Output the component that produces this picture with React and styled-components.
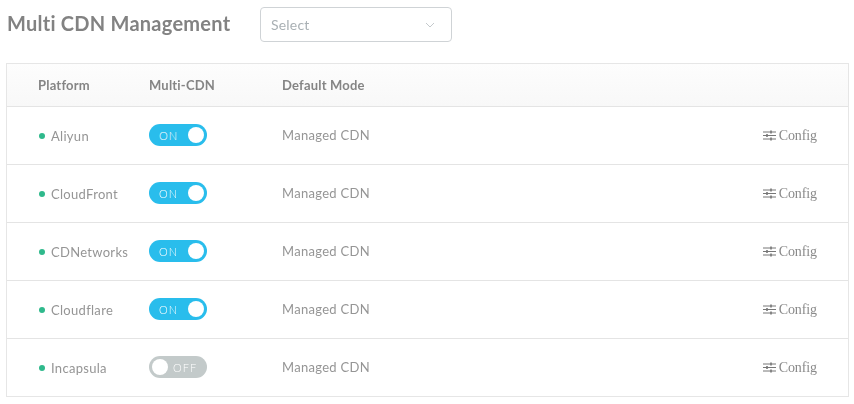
import React from "react";
import styled, { createGlobalStyle } from "styled-components";

const Global = createGlobalStyle`
  html, body { margin: 0; padding: 0; background: #fff; }
  body { font-family: "Lato", "Noto Sans", sans-serif; }
`;
const Page = styled.div`
  width: 854px; height: 404px; overflow: hidden; box-sizing: border-box;
  padding: 7px 5px 0 6px; filter: blur(0.4px);
`;
const TitleBar = styled.div`
  display: flex; align-items: center; height: 35px; margin-bottom: 21px;
`;
const Title = styled.h1`
  margin: 0 0 3px 1px; width: 253px; font-size: 20px; font-weight: 700; letter-spacing: 0.25px; color: #828282;
`;
const SelectBox = styled.div`
  width: 192px; height: 35px; box-sizing: border-box; display: flex; align-items: center; justify-content: space-between;
  padding: 0 16px 0 10px; border: 1px solid #cfd3d6; border-radius: 4px;
  font-size: 14px; letter-spacing: 0.2px; color: #a9b0b4;
`;
const Table = styled.div`
  border: 1px solid #e6e6e6; height: 334px; box-sizing: border-box;
`;
const Row = styled.div`
  display: grid; grid-template-columns: 111px 133px 1fr auto; align-items: center;
  height: ${p => (p.$head ? "42px" : "57px")}; padding: 0 31px;
  border-bottom: ${p => (p.$last ? "none" : "1px solid #e4e4e4")};
  background: ${p => (p.$head ? "linear-gradient(#fdfdfd, #f8f8f8)" : "#fff")};
  font-size: 13px; letter-spacing: 0.3px; color: #959595;
`;
const HeadCell = styled.div`
  font-weight: 700; color: #858585; font-size: 13px; letter-spacing: 0.2px;
`;
const Cell = styled.div`
  display: flex; align-items: center;
`;
const Name = styled(Cell)`
  margin-top: 1px;
`;
const Mode = styled(Cell)`
  margin-top: -1px;
`;
const Dot = styled.span`
  width: 6px; height: 6px; border-radius: 50%; background: #2fb98c; margin: 0 6px 0 1px;
`;
const Toggle = styled.div`
  position: relative; width: 58px; height: 22px; border-radius: 11px; margin-top: -2px;
  background: ${p => (p.$on ? "#29bdec" : "#c3caca")};
  color: #fff; font-size: 11px; font-weight: 300; letter-spacing: 1.1px; line-height: 23px;
  padding: ${p => (p.$on ? "0 0 0 10px" : "0 0 0 24px")}; box-sizing: border-box;
`;
const Knob = styled.span`
  position: absolute; top: 3px; ${p => (p.$on ? "right: 3px" : "left: 3px")};
  width: 16px; height: 16px; border-radius: 50%; background: #fff;
`;
const Config = styled.div`
  display: flex; align-items: center; gap: 3px; font-family: "Liberation Serif", serif;
  font-size: 14px; letter-spacing: -0.1px; color: #8a8a8a;
`;
const Sliders = () => (
  <svg width="13" height="11" viewBox="0 0 13 11" fill="none" stroke="#777" strokeWidth="1">
    <path d="M0 2h13M0 5.5h13M0 9h13" />
    <path d="M8 .5v3M4 4v3M8 7.5v3" strokeWidth="1.6" />
  </svg>
);
const Chevron = () => (
  <svg width="10" height="6" viewBox="0 0 10 6" fill="none" stroke="#c4c9cc" strokeWidth="1">
    <path d="M1 1l4 4 4-4" />
  </svg>
);
const platforms = ["Aliyun", "CloudFront", "CDNetworks", "Cloudflare", "Incapsula"];

export default function App() {
  return (
    <Page>
      <Global />
      <TitleBar>
        <Title>Multi CDN Management</Title>
        <SelectBox>Select<Chevron /></SelectBox>
      </TitleBar>
      <Table>
        <Row $head>
          <HeadCell>Platform</HeadCell>
          <HeadCell>Multi-CDN</HeadCell>
          <HeadCell>Default Mode</HeadCell>
          <div />
        </Row>
        {platforms.map((name, i) => {
          const on = name !== "Incapsula";
          return (
            <Row key={name} $last={i === platforms.length - 1}>
              <Name><Dot />{name}</Name>
              <Cell>
                <Toggle $on={on}>{on ? "ON" : "OFF"}<Knob $on={on} /></Toggle>
              </Cell>
              <Mode>Managed CDN</Mode>
              <Config><Sliders />Config</Config>
            </Row>
          );
        })}
      </Table>
    </Page>
  );
}
